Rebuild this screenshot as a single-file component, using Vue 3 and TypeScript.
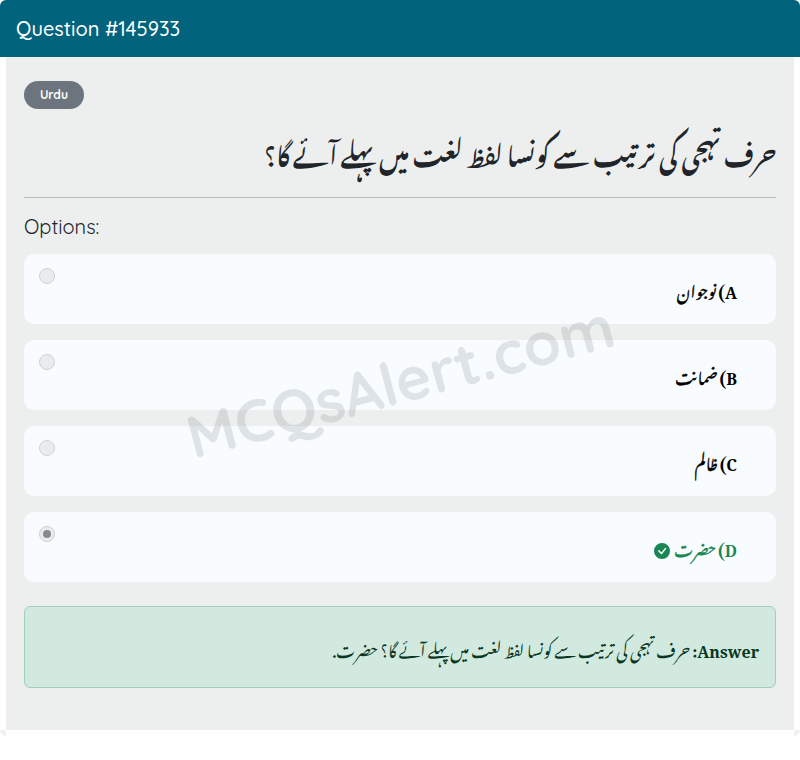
<script setup lang="ts">
interface Opt { key: string; text: string; correct?: boolean }
const options: Opt[] = [
  { key: 'A', text: 'نوجوان' },
  { key: 'B', text: 'ضمانت' },
  { key: 'C', text: 'ظالم' },
  { key: 'D', text: 'حضرت', correct: true },
]
</script>

<template>
  <div class="page">
    <div class="card">
      <header class="head">Question #145933</header>
      <main class="body">
        <div class="mark">MCQsAlert.com</div>
        <span class="badge">Urdu</span>
        <h1 class="question" dir="rtl">حرف تہجی کی ترتیب سے کونسا لفظ لغت میں پہلے آئے گا؟</h1>
        <hr class="rule" />
        <div class="label">Options:</div>
        <div class="options">
          <div v-for="o in options" :key="o.key" class="option" :class="{ right: o.correct }">
            <span class="radio" :class="{ checked: o.correct }"></span>
            <div class="opt-text" dir="rtl"><b>{{ o.key }})</b> <span class="word">{{ o.text }}</span><svg v-if="o.correct" class="tick" viewBox="0 0 16 16" width="16" height="16">
                <path fill="#198754" d="M16 8A8 8 0 1 1 0 8a8 8 0 0 1 16 0zm-3.97-3.03a.75.75 0 0 0-1.08.02L7.477 9.417 5.384 7.323a.75.75 0 0 0-1.06 1.06L6.97 11.03a.75.75 0 0 0 1.079-.02l3.992-4.99a.75.75 0 0 0-.01-1.05z"/>
              </svg></div>
          </div>
        </div>
        <div class="answer" dir="rtl"><b>Answer:</b> حرف تہجی کی ترتیب سے کونسا لفظ لغت میں پہلے آئے گا؟ حضرت.</div>
      </main>
    </div>
  </div>
</template>

<style>
html, body { margin: 0; background: #fff; }
</style>

<style scoped>
.page { width: 800px; height: 760px; overflow: hidden; font-family: "Quicksand", "Lato", "Noto Sans", sans-serif; font-weight: 400; color: #212529; }
.card { position: relative; display: flex; flex-direction: column; height: 730px; }
.card::before, .card::after {
  content: ""; position: absolute; top: 730px; width: 6px; height: 6px; background: #f1f3f3;
}
.card::before { left: 0; border-bottom-left-radius: 6px; }
.card::after { right: 0; border-bottom-right-radius: 6px; }
.head {
  height: 57px; box-sizing: border-box; background: #02637c; color: #fff; font-weight: 500;
  font-size: 20px; line-height: 57px; padding-left: 16px; border-radius: 6px 6px 0 0;
}
.body {
  position: relative; flex: 1; margin: 0 6px; padding: 24px 18px 0; background: #edefef;
  display: flex; flex-direction: column; align-items: stretch;
}
.mark {
  position: absolute; left: 0; right: 0; top: 286px; text-align: center;
  font-size: 60px; font-weight: 700; color: rgba(33, 47, 60, 0.12);
  transform: rotate(-15deg); pointer-events: none; z-index: 2;
}
.badge {
  align-self: flex-start; width: 60px; height: 28px; line-height: 28px; text-align: center;
  border-radius: 14px; background: #6c757d; color: #fff; font-size: 12px; font-weight: 700;
}
.question {
  margin: 16px 0 0; height: 72px; font-size: 24px; line-height: 52px; font-weight: 700; color: #212529;
  font-family: "Noto Nastaliq Urdu", serif;
}
.rule { margin: 0; border: 0; border-top: 1px solid #b9bbbb; }
.label { margin-top: 16px; font-size: 20px; line-height: 26px; }
.options { margin-top: 14px; display: flex; flex-direction: column; gap: 16px; }
.option {
  position: relative; height: 70px; border-radius: 10px; background: #f8fcff;
  padding: 13px 39px 0 60px; box-sizing: border-box; color: #000;
}
.radio {
  position: absolute; left: 15px; top: 14px; width: 16px; height: 16px; box-sizing: border-box;
  border-radius: 50%; border: 1px solid #cfd1d3; background: #e9ecef;
}
.radio.checked::after {
  content: ""; position: absolute; left: 3px; top: 3px; width: 8px; height: 8px; border-radius: 50%; background: #868a8e;
}
.opt-text { font-size: 16px; line-height: 44px; height: 44px; font-family: "Noto Nastaliq Urdu", serif; }
.word { font-weight: 400; -webkit-text-stroke: 0.35px currentColor; }
.tick { margin-right: 4px; vertical-align: -2px; }
.right { color: #198754; }
.answer {
  margin-top: 24px; height: 82px; box-sizing: border-box; border: 1px solid #a3cfbb; border-radius: 6px;
  background: #d2e9df; color: #0a3622; padding: 0 16px; font-size: 16px; line-height: 82px;
  font-family: "Noto Nastaliq Urdu", serif; white-space: nowrap;
}
</style>
